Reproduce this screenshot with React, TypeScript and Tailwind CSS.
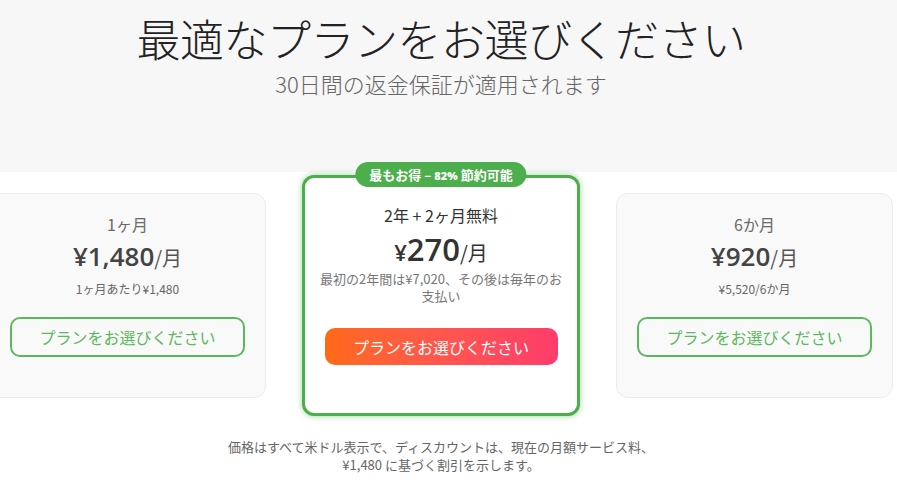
import React from "react";

const jp = "font-['Noto_Sans_CJK_JP',sans-serif]";
const num = "font-['Open_Sans','Noto_Sans_CJK_JP',sans-serif]";

function SideCard({ title, price, sub }: { title: string; price: string; sub: string }) {
  return (
    <div className="w-[277px] h-[205px] mt-[21px] rounded-[12px] border border-[#ececec] bg-[#f9f9f9] flex flex-col items-center pt-[19px] px-[20px]">
      <div className="text-[16px] leading-[22px] text-[#6a6a6a]">{title}</div>
      <div className="mt-[4px] h-[34px] flex items-baseline text-[#444]">
        <span className={`${num} text-[26px] font-semibold leading-[34px]`}>{price}</span>
        <span className="text-[20px] text-[#555]">/月</span>
      </div>
      <div className="mt-[7px] text-[12px] leading-[18px] text-[#666]">{sub}</div>
      <button className="mt-[19px] w-full h-[40px] rounded-[10px] border-2 border-[#5cb85c] text-[#5cb85c] text-[16px] bg-transparent">
        プランをお選びください
      </button>
    </div>
  );
}

export default function App() {
  return (
    <div className={`w-[897px] h-[490px] overflow-hidden bg-white ${jp}`}>
      <div className="w-full h-[172px] bg-[#f7f7f7]">
        <div className="w-[882px] flex flex-col items-center pt-[10px]">
          <h1 className="text-[44px] leading-[56px] text-[#222] font-light tracking-[-0.5px]">最適なプランをお選びください</h1>
          <p className="mt-[2px] text-[22px] leading-[30px] text-[#666] font-light">30日間の返金保証が適用されます</p>
        </div>
      </div>
      <div className="w-[882px] flex justify-center">
        <div className="w-[904px] shrink-0 flex items-start justify-between">
          <SideCard title="1ヶ月" price="¥1,480" sub="1ヶ月あたり¥1,480" />
          <div className="relative w-[278px] h-[241px] mt-[3px] rounded-[12px] border-[3px] border-[#4cae4c] bg-white shadow-[0_0_6px_rgba(76,174,76,0.55)] flex flex-col items-center pt-[25px] px-[19px]">
            <div className="absolute -top-[16px] left-1/2 -translate-x-1/2 h-[25px] px-[14px] rounded-full bg-[#4cae4c] text-white text-[13px] font-bold leading-[25px] whitespace-nowrap">
              最もお得 – <span className={`${num} text-[11px] font-extrabold`}>82%</span> 節約可能
            </div>
            <div className="text-[16px] leading-[24px] text-[#333]">2年 + 2ヶ月無料</div>
            <div className="mt-[4px] h-[36px] flex items-baseline text-[#333]">
              <span className={`${num} text-[22px] font-semibold`}>¥</span>
              <span className={`${num} text-[31px] font-semibold leading-[36px]`}>270</span>
              <span className="text-[20px]">/月</span>
            </div>
            <div className="mt-[3px] text-[13px] leading-[17px] text-[#777] text-center w-[244px]">
              最初の2年間は¥7,020、その後は毎年のお支払い
            </div>
            <button className="mt-[24px] w-[233px] h-[37px] rounded-[10px] bg-gradient-to-r from-[#ff6a13] to-[#ff3b6b] text-white text-[16px]">
              プランをお選びください
            </button>
          </div>
          <SideCard title="6か月" price="¥920" sub="¥5,520/6か月" />
        </div>
      </div>
      <div className="w-[882px] mt-[22px] text-center text-[13px] leading-[18px] text-[#666]">
        <div>価格はすべて米ドル表示で、ディスカウントは、現在の月額サービス料、</div>
        <div>¥1,480 に基づく割引を示します。</div>
      </div>
    </div>
  );
}
